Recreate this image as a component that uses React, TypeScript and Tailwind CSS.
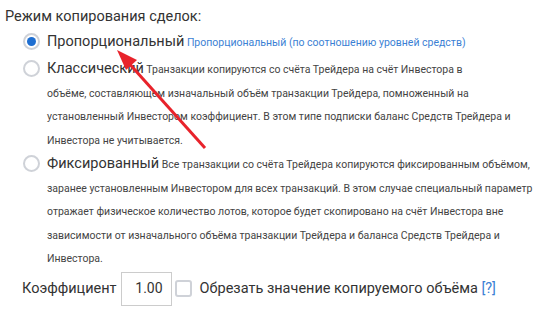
const FONT = { fontFamily: 'Roboto, "Noto Sans", sans-serif' };

function Radio({ checked }: { checked?: boolean }) {
  return (
    <span className="mt-[3px] flex h-[17px] w-[17px] shrink-0 items-center justify-center rounded-full border-2 border-[#cfd2d8] bg-white">
      {checked && <span className="h-[9px] w-[9px] rounded-full bg-[#1f6fd1]" />}
    </span>
  );
}

function Option({
  checked,
  label,
  children,
  blue,
  className = "",
}: {
  checked?: boolean;
  label: string;
  children: React.ReactNode;
  blue?: boolean;
  className?: string;
}) {
  return (
    <div className={"flex items-start gap-[7px] " + className}>
      <Radio checked={checked} />
      <p className="whitespace-nowrap text-[10.5px] leading-[23.5px] text-[#444]">
        <span className="text-[14.5px] text-[#333]">{label}</span>{" "}
        <span className={blue ? "text-[#3b7fd4]" : ""}>{children}</span>
      </p>
    </div>
  );
}

export default function App() {
  return (
    <div className="relative h-[329px] w-[539px] overflow-hidden bg-white" style={FONT}>
      <div className="pl-[5px] pt-[6px]">
        <div className="text-[14.5px] leading-[22px] text-[#333]">Режим копирования сделок:</div>
        <div className="ml-[18px] mt-[2px] flex flex-col">
          <Option checked label="Пропорциональный" blue>
            Пропорциональный (по соотношению уровней средств)
          </Option>
          <Option label="Классический" className="mt-[2.5px]">
            Транзакции копируются со счёта Трейдера на счёт Инвестора в<br />
            объёме, составляющем изначальный объём транзакции Трейдера, помноженный на<br />
            установленный Инвестором коэффициент. В этом типе подписки баланс Средств Трейдера и<br />
            Инвестора не учитывается.
          </Option>
          <Option label="Фиксированный">
            Все транзакции со счёта Трейдера копируются фиксированным объёмом,<br />
            заранее установленным Инвестором для всех транзакций. В этом случае специальный параметр<br />
            отражает физическое количество лотов, которое будет скопировано на счёт Инвестора вне<br />
            зависимости от изначального объёма транзакции Трейдера и баланса Средств Трейдера и<br />
            Инвестора.
          </Option>
        </div>
        <div className="ml-[17px] mt-[1px] flex items-center text-[14.5px] text-[#333]">
          <span>Коэффициент</span>
          <div className="ml-[4px] flex h-[34px] w-[51px] items-center justify-end border border-[#ccc] pr-[8px] text-[14px] text-[#333]">
            1.00
          </div>
          <span className="ml-[3px] h-[17px] w-[17px] rounded-[3px] border-2 border-[#cfd2d8]" />
          <span className="ml-[8px]">
            Обрезать значение копируемого объёма <span className="text-[#3b7fd4]">[?]</span>
          </span>
        </div>
      </div>

      <svg className="pointer-events-none absolute left-0 top-0" width="539" height="329">
        <line x1="205" y1="148" x2="126" y2="60" stroke="#e8232b" strokeWidth="3" />
        <polygon points="117,50 137,60 126,70" fill="#e8232b" />
      </svg>
    </div>
  );
}
